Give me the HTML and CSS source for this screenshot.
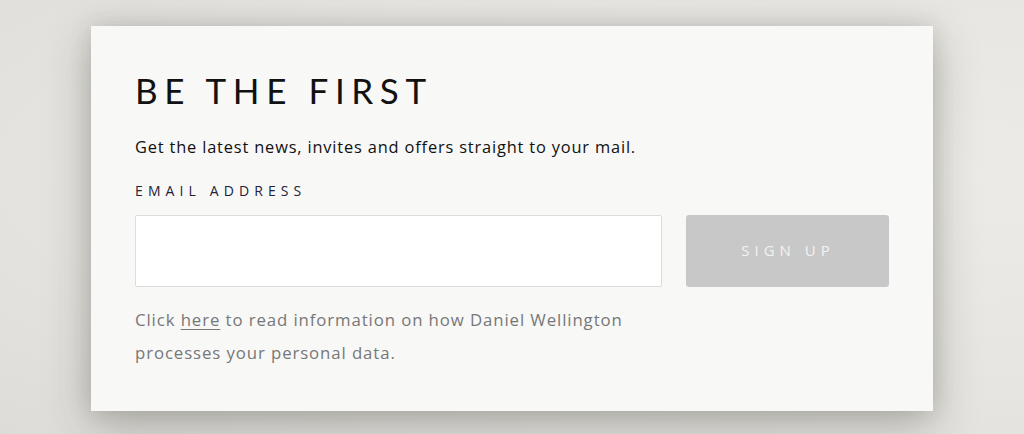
FILE: index.html
```html
<!DOCTYPE html>
<html lang="en">
<head>
<meta charset="utf-8">
<title>Be the first</title>
<link rel="stylesheet" href="styles.css">
</head>
<body>
<div class="page">
  <section class="card">
    <h1 class="title">BE THE FIRST</h1>
    <p class="lead">Get the latest news, invites and offers straight to your mail.</p>
    <label class="label" for="email">EMAIL ADDRESS</label>
    <div class="row">
      <input class="input" id="email" type="email">
      <button class="btn" type="button">SIGN UP</button>
    </div>
    <p class="note">Click <a href="#" class="link">here</a> to read information on how Daniel Wellington<br>processes your personal data.</p>
  </section>
</div>
</body>
</html>
```
FILE: styles.css
```css
html, body {
  margin: 0;
  padding: 0;
}
body {
  width: 1024px;
  height: 434px;
  overflow: hidden;
  background: radial-gradient(ellipse at 90% 40%, #ecebe7 0%, #e6e5e1 60%, #dedcd8 100%);
  font-family: "Open Sans", Lato, sans-serif;
}
.page {
  padding: 26px 0 0 91px;
}
.card {
  box-sizing: border-box;
  width: 842px;
  height: 385px;
  background: #f8f8f7;
  padding: 41px 44px 0 44px;
  box-shadow: 0 14px 44px rgba(60, 58, 50, 0.32), 0 0 20px rgba(60, 58, 50, 0.14);
}
.title {
  margin: 0;
  font-family: Lato, sans-serif;
  font-weight: 400;
  font-size: 35px;
  line-height: 46px;
  letter-spacing: 6.6px;
  color: #111;
}
.lead {
  margin: 23px 0 0;
  font-size: 16.4px;
  line-height: 22px;
  letter-spacing: 0.83px;
  color: #111;
}
.label {
  display: block;
  margin-top: 24px;
  font-size: 14px;
  line-height: 18px;
  letter-spacing: 5.1px;
  color: #22223a;
}
.row {
  display: flex;
  gap: 24px;
  margin-top: 15px;
}
.input {
  box-sizing: border-box;
  width: 527px;
  height: 72px;
  border: 1px solid #dcdcdc;
  border-radius: 2px;
  background: #fff;
  margin: 0;
}
.btn {
  width: 203px;
  height: 72px;
  border: 0;
  border-radius: 3px;
  background: #c8c8c8;
  color: #f2f2f2;
  font-family: inherit;
  font-size: 15px;
  letter-spacing: 5px;
  padding: 0 0 2px 1px;
  margin: 0;
}
.note {
  margin: 16px 0 0;
  font-size: 16.8px;
  line-height: 33px;
  letter-spacing: 0.9px;
  color: #777;
}
.link {
  color: #777;
  text-decoration: underline;
  text-underline-offset: 3px;
}
```
